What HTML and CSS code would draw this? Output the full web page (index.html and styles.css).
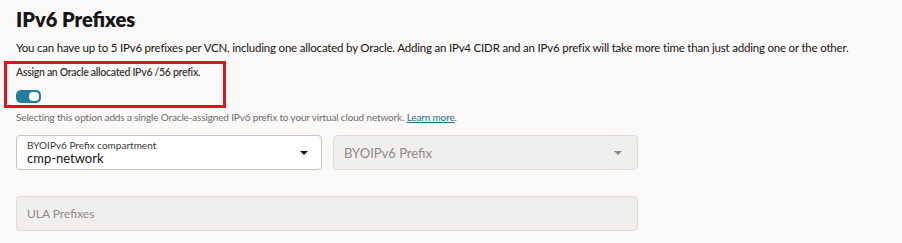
FILE: index.html
```html
<!DOCTYPE html>
<html lang="en">

<head>
    <meta charset="UTF-8">
    <meta name="viewport" content="width=device-width, initial-scale=1.0">
    <title>IPv6 Prefixes</title>
    <link rel="stylesheet" href="styles.css">
</head>

<body>
    <div class="secao">
        <h1 class="titulo">IPv6 Prefixes</h1>
        <p class="descricao">You can have up to 5 IPv6 prefixes per VCN, including one allocated by Oracle. Adding an IPv4 CIDR and an IPv6 prefix will take more time than just adding one or the other.</p>

        <!-- caixa vermelha em volta do toggle -->
        <div class="destaque">
            <label class="rotulo-toggle">Assign an Oracle allocated IPv6 /56 prefix.</label>
            <span class="toggle"><span class="bolinha"></span></span>
        </div>
        <p class="ajuda">Selecting this option adds a single Oracle-assigned IPv6 prefix to your virtual cloud network. <a href="#">Learn more</a>.</p>

        <div class="linha">
            <div class="campo">
                <div class="textos">
                    <span class="mini-rotulo">BYOIPv6 Prefix compartment</span>
                    <span class="valor">cmp-network</span>
                </div>
                <span class="seta"></span>
            </div>
            <div class="campo desativado">
                <span class="placeholder">BYOIPv6 Prefix</span>
                <span class="seta"></span>
            </div>
        </div>

        <div class="campo desativado largo">
            <span class="placeholder menor">ULA Prefixes</span>
        </div>
    </div>
</body>

</html>
```

FILE: styles.css
```css
* {
    margin: 0;
    padding: 0;
    box-sizing: border-box;
}

body {
    background-color: #fbf9f8;
    font-family: Lato, "Noto Sans", sans-serif;
    color: #161513;
}

.secao {
    padding: 7px 16px 0 16px;
}

.titulo {
    font-size: 20px;
    line-height: 24px;
    font-weight: 800;
}

.descricao {
    margin-top: 9px;
    font-size: 11.5px;
    letter-spacing: -0.2px;
    line-height: 16px;
    white-space: nowrap;
}

.destaque {
    margin-top: 5px;
    margin-left: -12px;
    width: 222px;
    height: 47px;
    border: 3px solid #e0141e;
    padding: 1px 0 0 9px;
    display: flex;
    flex-direction: column;
    align-items: flex-start;
    gap: 11px;
}

.rotulo-toggle {
    font-size: 10.5px;
    letter-spacing: -0.3px;
    line-height: 14px;
    font-weight: 600;
    color: #3a3835;
}

.toggle {
    width: 25px;
    height: 13px;
    border-radius: 5px;
    background-color: #227e9e;
    display: flex;
    justify-content: flex-end;
    padding: 2px;
}

.bolinha {
    width: 10px;
    height: 9px;
    border-radius: 4px;
    background-color: white;
}

.ajuda {
    margin-top: 1px;
    font-size: 10px;
    letter-spacing: -0.15px;
    line-height: 16px;
    color: #6f6c69;
}

.ajuda a {
    color: #1d6d8c;
}

.linha {
    margin-top: 10px;
    display: flex;
    gap: 11px;
}

.campo {
    width: 306px;
    height: 35px;
    border: 1px solid #c9c5c1;
    border-radius: 4px;
    background-color: white;
    display: flex;
    align-items: center;
    justify-content: space-between;
    padding: 0 13px 0 10px;
}

.textos {
    display: flex;
    flex-direction: column;
}

.mini-rotulo {
    font-size: 10px;
    line-height: 12px;
    color: #3a3835;
}

.valor {
    font-size: 13px;
    line-height: 15px;
}

.seta {
    width: 0;
    height: 0;
    border-left: 4px solid transparent;
    border-right: 4px solid transparent;
    border-top: 4px solid #161513;
}

.desativado {
    background-color: #f1efed;
    border-color: #dedbd8;
    width: 305px;
}

.desativado .seta {
    border-top-color: #8e8a86;
    margin-right: 2px;
}

.placeholder {
    font-size: 13px;
    color: #8e8a86;
}

.largo {
    width: 622px;
    margin-top: 26px;
}

.menor {
    font-size: 12px;
}
```
